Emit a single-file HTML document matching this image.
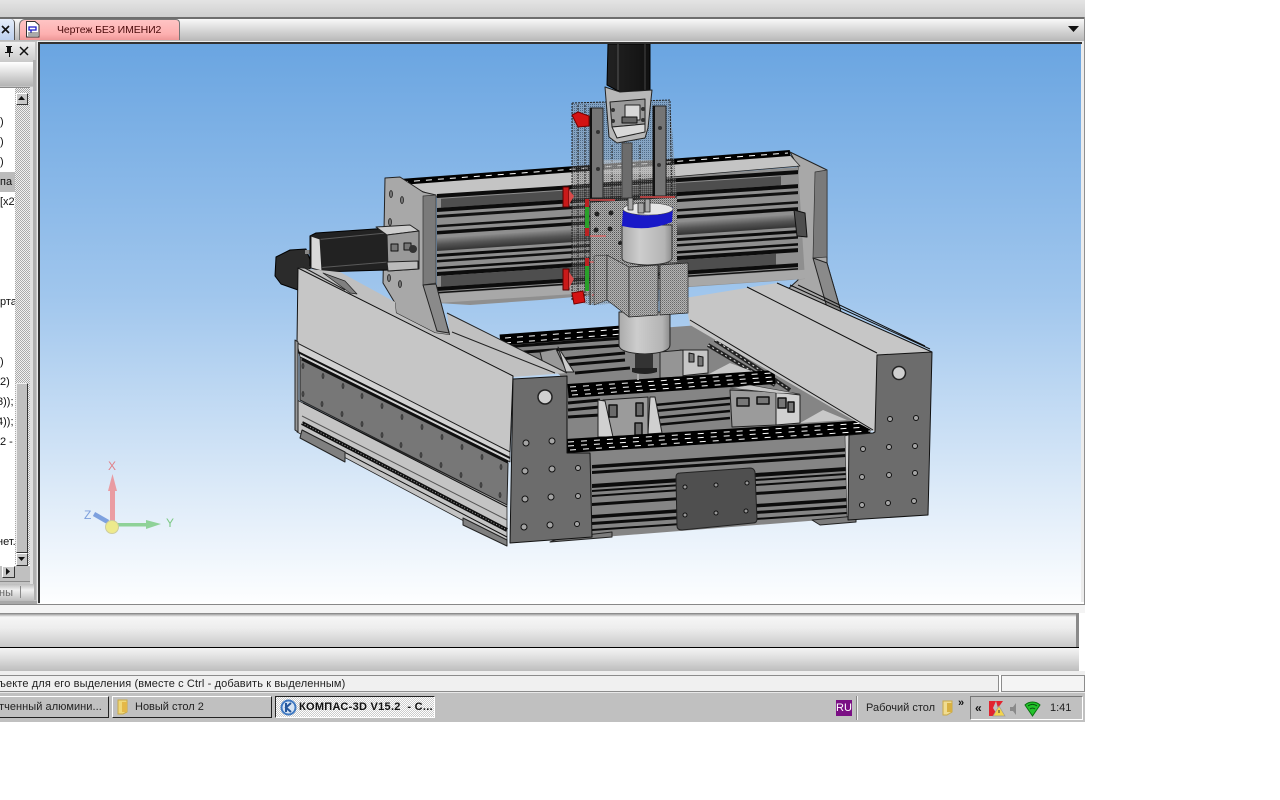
<!DOCTYPE html>
<html lang="ru"><head><meta charset="utf-8"><title>КОМПАС-3D V15.2</title>
<style>
html,body{margin:0;padding:0;background:#fff;width:1280px;height:800px;overflow:hidden}
body{position:relative;font:11px "Liberation Sans","Noto Sans CJK SC",sans-serif;color:#111}
.a{position:absolute;box-sizing:border-box}
.t{position:absolute;white-space:nowrap;line-height:13px}
</style></head><body>

<!-- window top -->
<div class="a" style="left:0;top:0;width:1085px;height:17px;background:linear-gradient(#e4e4e4,#cfcfcf)"></div>
<div class="a" style="left:0;top:17px;width:1085px;height:2px;background:#6e6e6e"></div>
<div class="a" style="left:0;top:19px;width:1085px;height:22px;background:linear-gradient(#f8f8f8,#d4d4d4 55%,#b8b8b8)"></div>
<div class="a" style="left:1084px;top:17px;width:1px;height:587px;background:#909090"></div>

<!-- left doc tab -->
<div class="a" style="left:0;top:19px;width:15px;height:21px;background:linear-gradient(#e6eefa,#bcd0ee);border-right:1px solid #555;border-radius:0 4px 0 0"></div>
<svg class="a" style="left:1px;top:25px" width="10" height="10"><path d="M1 1L8 8M8 1L1 8" stroke="#111" stroke-width="1.6"/></svg>
<!-- red tab -->
<div class="a" style="left:19px;top:19px;width:161px;height:21px;background:linear-gradient(#ffc4c4,#fdb0b0 70%,#ee9898);border:1px solid #777;border-bottom:0;border-radius:6px 4px 0 0"></div>
<svg class="a" style="left:26px;top:21px" width="14" height="17"><path d="M.5.5H9L13 4V16H.5Z" fill="#fff" stroke="#333"/><path d="M3 6H10V9H3ZM5 9V12" fill="none" stroke="#1a1ac8" stroke-width="1.3"/><path d="M2 12H12M2 14H12" stroke="#555"/></svg>
<div class="t" style="left:57px;top:24px;color:#4a0b0b;font-size:10.500px;letter-spacing:-.1px">Чертеж БЕЗ ИМЕНИ2</div>
<svg class="a" style="left:1068px;top:26px" width="11" height="7"><path d="M0 0H11L5.500 6Z" fill="#111"/></svg>

<!-- left panel -->
<div class="a" style="left:0;top:41px;width:39px;height:563px;background:#c4c4c4"></div>
<div class="a" style="left:0;top:42px;width:35px;height:20px;background:linear-gradient(#f0f0f0,#c9c9c9)"></div>
<svg class="a" style="left:2px;top:45px" width="30" height="13"><path d="M4 1H10V2H9V7H11V8H8V12H7V8H3V7H5V2H4Z" fill="#111"/><path d="M18 2L26 10M26 2L18 10" stroke="#111" stroke-width="1.5"/></svg>
<div class="a" style="left:0;top:62px;width:34px;height:24px;background:linear-gradient(#fff,#e6e6e6 35%,#b4b4b4)"></div>
<div class="a" style="left:0;top:87px;width:31px;height:495px;background:#fff;border-right:1px solid #8a8a8a;border-top:1px solid #8a8a8a;border-bottom:1px solid #8a8a8a"></div>
<div class="t" style="left:0;top:116px">)</div>
<div class="t" style="left:0;top:136px">)</div>
<div class="t" style="left:0;top:156px">)</div>
<div class="a" style="left:0;top:172px;width:15px;height:20px;background:#bcbcbc"></div>
<div class="t" style="left:0;top:176px">па (</div>
<div class="t" style="left:0;top:196px">[x2]</div>
<div class="t" style="left:0;top:296px">рта</div>
<div class="t" style="left:0;top:356px">)</div>
<div class="t" style="left:0;top:376px">2)</div>
<div class="t" style="left:-3px;top:396px">3)); :</div>
<div class="t" style="left:-3px;top:416px">4)); :</div>
<div class="t" style="left:0;top:436px">2 -</div>
<div class="t" style="left:-3px;top:536px">нет.</div>
<div class="a" style="left:15px;top:88px;width:15px;height:477px;background-color:#ddd;background-image:conic-gradient(#aaa 25%,#f2f2f2 0 50%,#aaa 0 75%,#f2f2f2 0);background-size:2px 2px"></div>
<!-- scrollbar -->
<div class="a" style="left:16px;top:93px;width:12px;height:12px;background:#c8c8c8;border:1px solid;border-color:#fff #333 #333 #fff"></div>
<svg class="a" style="left:18px;top:96px" width="8" height="5"><path d="M0 4H7L3.500 0Z" fill="#111"/></svg>
<div class="a" style="left:16px;top:383px;width:12px;height:170px;background:#c0c0c0;border:1px solid;border-color:#eee #333 #333 #eee"></div>
<div class="a" style="left:16px;top:553px;width:12px;height:13px;background:#c8c8c8;border:1px solid;border-color:#fff #333 #333 #fff"></div>
<svg class="a" style="left:18px;top:557px" width="8" height="5"><path d="M0 0H7L3.500 4Z" fill="#111"/></svg>
<div class="a" style="left:0;top:566px;width:30px;height:15px;background:#c0c0c0"></div>
<div class="a" style="left:2px;top:566px;width:13px;height:12px;background:#c8c8c8;border:1px solid;border-color:#fff #333 #333 #fff"></div>
<svg class="a" style="left:6px;top:568px" width="5" height="8"><path d="M0 0V7L4 3.500Z" fill="#111"/></svg>
<div class="a" style="left:30px;top:87px;width:3px;height:497px;background:#e0e0e0"></div>
<div class="a" style="left:33px;top:60px;width:3px;height:540px;background:#b0b0b0"></div>
<div class="a" style="left:0;top:584px;width:34px;height:17px;background:linear-gradient(#bdbdbd,#f0f0f0 35%,#bcbcbc)"></div>
<div class="t" style="left:-1px;top:587px;color:#666">ны</div>
<div class="a" style="left:20px;top:586px;width:1px;height:12px;background:#888"></div>
<div class="a" style="left:0;top:601px;width:39px;height:3px;background:#a8a8a8"></div>

<!-- viewport -->
<div class="a" style="left:37px;top:41px;width:1047px;height:563px;background:#ececec;"></div>
<div class="a" style="left:38px;top:42px;width:2px;height:561px;background:#333"></div>
<div class="a" style="left:38px;top:42px;width:1044px;height:2px;background:#333"></div>
<div class="a" style="left:40px;top:602px;width:1044px;height:2px;background:#fff"></div>

<svg class="a" style="left:0;top:0" width="1280" height="800" viewBox="0 0 1280 800">
<defs>
<linearGradient id="sky" x1="0" y1="0" x2="0" y2="1"><stop offset="0" stop-color="#6aa5e1"/><stop offset=".45" stop-color="#a0c6ed"/><stop offset=".8" stop-color="#dceaf8"/><stop offset="1" stop-color="#fdfeff"/></linearGradient>
<linearGradient id="rod" x1="0" y1="0" x2="0" y2="1"><stop offset="0" stop-color="#8a8a8a"/><stop offset=".5" stop-color="#555"/><stop offset="1" stop-color="#333"/></linearGradient>
<linearGradient id="cyl" x1="0" y1="0" x2="1" y2="0"><stop offset="0" stop-color="#aaa"/><stop offset=".35" stop-color="#cdcdcd"/><stop offset=".85" stop-color="#b4b4b4"/><stop offset="1" stop-color="#8c8c8c"/></linearGradient>
<linearGradient id="motor" x1="0" y1="0" x2="1" y2="0"><stop offset="0" stop-color="#222"/><stop offset="1" stop-color="#111"/></linearGradient>
<pattern id="st" width="2" height="2" patternUnits="userSpaceOnUse"><rect width="2" height="2" fill="#b4b4b4"/><rect width="1" height="1" fill="#6a6a6a"/><rect x="1" y="1" width="1" height="1" fill="#8a8a8a"/></pattern>
<pattern id="stl" width="2" height="2" patternUnits="userSpaceOnUse"><rect width="1" height="1" fill="#222"/><rect x="1" y="1" width="1" height="1" fill="#999"/></pattern>
<pattern id="stb" width="2" height="2" patternUnits="userSpaceOnUse"><rect width="2" height="2" fill="#b0b0b0"/><rect width="1" height="1" fill="#555"/><rect x="1" y="1" width="1" height="1" fill="#888"/></pattern>
<clipPath id="vp"><rect x="40" y="44" width="1041" height="558"/></clipPath>
</defs>
<rect x="40" y="44" width="1041" height="558" fill="url(#sky)"/>
<g clip-path="url(#vp)" stroke-linejoin="round">

<!-- bed base -->
<polygon points="500,340 700,325 880,430 567,455 560,375" fill="#858585"/>
<g stroke="#0c0c0c" fill="none">
<path d="M503,347L625,338M510,353L625,345" stroke-width="3"/>
<path d="M560,359L625,353M565,365L625,360M575,373L630,368" stroke-width="3"/>
<path d="M568,403L600,400M568,410L600,407M568,417L600,415" stroke-width="3"/>
<path d="M655,405L730,398M655,411L730,404M655,418L730,411M655,425L730,418" stroke-width="2.500"/>
</g>
<!-- back slotted strip -->
<path d="M500,340L622,331" stroke="#000" stroke-width="11"/>
<path d="M505,338L622,329M505,343L622,334" stroke="#fff" stroke-width="1" stroke-dasharray="6 6"/>

<!-- right rail inner hatch -->
<path d="M708,345L775,385M715,340L790,390" stroke="#222" stroke-width="4"/>
<path d="M708,345L775,385M715,340L790,390" stroke="#ddd" stroke-width="1" stroke-dasharray="2 3"/>
<polygon points="707,375 730,363 757,373" fill="#c8c8c8"/>
<polygon points="800,423 823,410 847,420" fill="#c8c8c8"/>

<!-- block C -->
<polygon points="680,350 708,350 708,373 680,376" fill="#c6c6c6" stroke="#222"/>
<polygon points="660,352 683,350 683,377 660,378" fill="#959595" stroke="#222"/>
<path d="M689,353V362H694V354ZM698,356V366H703V357Z" fill="#777" stroke="#111"/>
<polygon points="540,352 556,349 567,372 545,372" fill="#999" stroke="#222"/>
<polygon points="558,347 566,372 574,372" fill="#ccc" stroke="#222"/>

<!-- middle slotted strip -->
<path d="M568,391L775,377" stroke="#000" stroke-width="14"/>
<path d="M570,387L772,373M571,391L774,377M572,395L775,381" stroke="#fff" stroke-width="1" stroke-dasharray="6 7"/>

<!-- block A -->
<polygon points="603,400 648,397 648,435 603,437" fill="#9b9b9b" stroke="#222"/>
<polygon points="598,400 605,401 613,437 598,437" fill="#d0d0d0" stroke="#222"/>
<polygon points="650,397 655,397 662,433 648,434" fill="#d0d0d0" stroke="#222"/>
<path d="M609,405H617V417H609ZM636,403H643V416H636ZM635,423H642V435H635Z" fill="#6a6a6a" stroke="#111" stroke-width="1.500"/>
<!-- block B -->
<polygon points="730,390 776,392 776,425 732,427" fill="#9b9b9b" stroke="#222"/>
<polygon points="776,392 800,395 800,423 776,425" fill="#d0d0d0" stroke="#222"/>
<polygon points="730,388 750,385 800,394 776,393" fill="#c6c6c6" stroke="#333" stroke-width=".6"/>
<path d="M737,398H749V406H737ZM757,397H769V404H757ZM778,398H786V408H778ZM788,402H794V412H788Z" fill="#777" stroke="#111" stroke-width="1.500"/>

<!-- rear gantry and right plate -->
<polygon points="798,167 790,152 827,170 827,263 840,308 842,317 827,310 787,290 798,280" fill="#a8a8a8" stroke="#222"/>
<polygon points="815,172 827,170 827,257 813,258" fill="#7a7a7a" stroke="#333" stroke-width=".7"/>
<polygon points="813,258 827,263 840,308 842,317 828,311" fill="#8a8a8a" stroke="#222"/>

<!-- gantry face -->
<polygon points="437,195 798,167 805,279 689,287 540,300 470,305 437,303" fill="#8f8f8f"/>
<polygon points="403,184 790,155 800,166 437,197" fill="#c4c4c4" stroke="#222" stroke-width=".7"/>
<path d="M400,182L790,153" stroke="#000" stroke-width="6"/>
<path d="M402,182L788,153" stroke="#fff" stroke-width="1" stroke-dasharray="6 6"/>
<g transform="matrix(1,-0.066,0,1,437,0)">
  <rect x="0" y="194" width="361" height="4" fill="#0c0c0c"/>
  <rect x="4" y="199" width="340" height="9" fill="#4e4e4e"/>
  <rect x="0" y="208" width="361" height="4" fill="#0c0c0c"/>
  <rect x="0" y="215" width="361" height="3" fill="#111"/>
  <rect x="0" y="225" width="361" height="2.500" fill="#111"/>
  <rect x="0" y="231" width="361" height="3.500" fill="#0c0c0c"/>
  <rect x="0" y="238" width="366" height="13" fill="url(#rod)"/>
  <rect x="0" y="254" width="361" height="3" fill="#0c0c0c"/>
  <rect x="0" y="260" width="361" height="2.500" fill="#111"/>
  <rect x="0" y="267" width="361" height="2.500" fill="#0c0c0c"/>
  <rect x="0" y="272" width="361" height="4" fill="#0c0c0c"/>
  <rect x="4" y="276" width="335" height="11" fill="#4e4e4e"/>
  <rect x="0" y="287" width="361" height="4" fill="#0c0c0c"/>
  <rect x="0" y="292" width="361" height="1.500" fill="#111"/>
  <rect x="0" y="294" width="370" height="9" fill="#a8a8a8"/>
</g>
<polygon points="794,210 805,213 807,237 797,236" fill="#4e4e4e" stroke="#111"/>

<!-- left gantry plate -->
<polygon points="385,178 400,177 423,192 436,195 436,285 440,303 450,335 435,333 396,313 395,303 383,283" fill="#a8a8a8" stroke="#222"/>
<polygon points="423,196 436,195 436,283 423,285" fill="#7a7a7a" stroke="#333" stroke-width=".7"/>
<polygon points="423,285 436,284 449,333 437,331" fill="#8a8a8a" stroke="#222"/>
<g fill="#777" stroke="#222" stroke-width=".8"><ellipse cx="391" cy="194" rx="1.500" ry="3.500"/><ellipse cx="402" cy="200" rx="1.500" ry="3.500"/><ellipse cx="390" cy="222" rx="1.500" ry="3.500"/><ellipse cx="389" cy="278" rx="1.500" ry="3.500"/><ellipse cx="400" cy="284" rx="1.500" ry="3.500"/></g>

<!-- back Y motor -->
<polygon points="276,257 290,250 306,249 312,265 298,290 281,284 275,276" fill="#2b2b2b" stroke="#000"/>
<rect x="305" y="250" width="12" height="4" fill="#888"/>
<!-- X motor -->
<polygon points="310,236 316,233 390,228 388,270 320,272 310,266" fill="#222" stroke="#000"/>
<path d="M314,240L386,233M316,268L388,262" stroke="#5a5a5a"/>
<polygon points="311,236 320,239 322,271 311,268" fill="#d8d8d8" stroke="#222"/>
<polygon points="376,227 410,225 419,231 387,235" fill="#cdcdcd" stroke="#222"/>
<polygon points="387,235 419,231 419,269 388,271" fill="#999" stroke="#222"/>
<polygon points="387,262 418,261 418,269 388,271" fill="#bbb" stroke="#222"/>
<path d="M391,244H398V251H391ZM404,243H411V250H404Z" fill="#777" stroke="#111"/>
<circle cx="413" cy="249" r="4" fill="#333"/>

<!-- left rail back strip -->
<polygon points="340,272 395,302 396,313 435,333 450,335 447,313 567,373 513,377 298,268" fill="#c0c0c0"/>
<polygon points="323,273 345,281 357,294 350,293" fill="#808080" stroke="#222" stroke-width=".7"/>
<path d="M303,267L345,290M447,313L567,373M452,332L555,373" stroke="#222" stroke-width="1"/>
<!-- left rail top face -->
<polygon points="298,268 513,376 510,452 297,343" fill="#c6c6c6" stroke="#111"/>
<polygon points="297,343 300,357 510,462 510,452" fill="#d2d2d2" stroke="#222" stroke-width=".8"/>
<path d="M298,352L510,458" stroke="#111" stroke-width="2"/>
<!-- dark side plate -->
<polygon points="300,357 508,463 507,505 300,400" fill="#777" stroke="#222"/>
<path d="M302,359L508,462" stroke="#111" stroke-width="3"/>
<g fill="#555" stroke="#222" stroke-width=".6">
<ellipse cx="303" cy="366" rx="1" ry="2.500"/><ellipse cx="323" cy="376" rx="1" ry="2.500"/><ellipse cx="343" cy="386" rx="1" ry="2.500"/><ellipse cx="362" cy="396" rx="1" ry="2.500"/><ellipse cx="382" cy="406" rx="1" ry="2.500"/><ellipse cx="402" cy="417" rx="1" ry="2.500"/><ellipse cx="422" cy="427" rx="1" ry="2.500"/><ellipse cx="442" cy="437" rx="1" ry="2.500"/><ellipse cx="462" cy="447" rx="1" ry="2.500"/><ellipse cx="482" cy="457" rx="1" ry="2.500"/><ellipse cx="501" cy="467" rx="1" ry="2.500"/>
<ellipse cx="303" cy="394" rx="1" ry="2.500"/><ellipse cx="322" cy="404" rx="1" ry="2.500"/><ellipse cx="342" cy="414" rx="1" ry="2.500"/><ellipse cx="362" cy="424" rx="1" ry="2.500"/><ellipse cx="382" cy="435" rx="1" ry="2.500"/><ellipse cx="401" cy="445" rx="1" ry="2.500"/><ellipse cx="421" cy="455" rx="1" ry="2.500"/><ellipse cx="441" cy="465" rx="1" ry="2.500"/><ellipse cx="461" cy="475" rx="1" ry="2.500"/><ellipse cx="481" cy="485" rx="1" ry="2.500"/><ellipse cx="500" cy="495" rx="1" ry="2.500"/></g>
<!-- lower strips -->
<polygon points="297,400 507,505 507,544 297,432" fill="#c4c4c4" stroke="#222" stroke-width=".8"/>
<path d="M303,403L507,507" stroke="#111"/>
<path d="M302,416L507,520" stroke="#555"/>
<path d="M302,423L507,530" stroke="#111" stroke-width="4"/>
<path d="M302,423L507,530" stroke="#aaa" stroke-dasharray="1 2"/>
<path d="M302,430L507,537" stroke="#111"/>
<polygon points="302,430 345,452 345,462 300,438" fill="#808080" stroke="#222"/>
<polygon points="463,518 507,540 507,546 463,525" fill="#808080" stroke="#222"/>
<polygon points="295,340 298,342 298,432 295,430" fill="#999" stroke="#222"/>

<!-- front beam -->
<polygon points="590,452 847,435 847,518 590,538" fill="#858585"/>
<g transform="matrix(1,-0.067,0,1,592,0)">
 <g fill="#0c0c0c"><rect y="465" width="256" height="3.500"/><rect y="471" width="256" height="3"/><rect y="484" width="256" height="4"/><rect y="490" width="256" height="2"/><rect y="495" width="256" height="2"/><rect y="503" width="256" height="3"/><rect y="515" width="256" height="3.500"/><rect y="522" width="256" height="3"/><rect y="529" width="256" height="2"/></g>
</g>
<polygon points="845,436 849,435 849,518 847,519" fill="#cfcfcf" stroke="#333" stroke-width=".6"/>
<polygon points="812,520 856,516 856,522 820,525" fill="#7c7c7c" stroke="#222"/>
<polygon points="560,538 612,532 612,537 550,542" fill="#7c7c7c" stroke="#222"/>
<!-- dark plate -->
<path d="M680,473L750,468Q754,468 755,472L757,519Q757,523 753,523L682,530Q677,530 677,526L676,477Q676,473 680,473Z" fill="#4f4f4f" stroke="#222"/>
<g fill="#999" stroke="#111" stroke-width="1"><circle cx="685" cy="487" r="2"/><circle cx="716" cy="485" r="2"/><circle cx="747" cy="483" r="2"/><circle cx="685" cy="515" r="2"/><circle cx="716" cy="513" r="2"/><circle cx="746" cy="511" r="2"/></g>

<!-- front slotted strip -->
<path d="M566,446L870,427" stroke="#000" stroke-width="14"/>
<path d="M568,442L866,423M568,446L868,427M570,450L870,431" stroke="#fff" stroke-width="1" stroke-dasharray="6 7"/>

<!-- right rail top -->
<polygon points="685,298 777,283 932,352 877,355 875,432 860,424 690,325" fill="#c6c6c6"/>
<path d="M747,287L877,353M690,320L873,430M777,283L932,352M790,285L930,349M798,285L925,346" stroke="#111"/>
<!-- right plate -->
<polygon points="877,355 932,352 928,515 848,520 849,435 873,433 875,432" fill="#6c6c6c" stroke="#111"/>
<circle cx="899" cy="373" r="6.500" fill="#cfcfcf" stroke="#222" stroke-width="1.500"/>
<g fill="#a5a5a5" stroke="#111"><circle cx="890" cy="419" r="2.500"/><circle cx="916" cy="418" r="2.500"/><circle cx="863" cy="449" r="2.500"/><circle cx="889" cy="447" r="2.500"/><circle cx="915" cy="446" r="2.500"/><circle cx="862" cy="477" r="2.500"/><circle cx="889" cy="475" r="2.500"/><circle cx="915" cy="473" r="2.500"/><circle cx="862" cy="505" r="2.500"/><circle cx="888" cy="503" r="2.500"/><circle cx="914" cy="501" r="2.500"/></g>
<!-- left front plate -->
<polygon points="513,379 567,376 567,453 590,453 592,537 510,543" fill="#6c6c6c" stroke="#111"/>
<circle cx="545" cy="397" r="7" fill="#cfcfcf" stroke="#222" stroke-width="1.500"/>
<g fill="#a5a5a5" stroke="#111"><circle cx="526" cy="443" r="3"/><circle cx="552" cy="441" r="3"/><circle cx="525" cy="471" r="3"/><circle cx="552" cy="469" r="3"/><circle cx="578" cy="468" r="2.500"/><circle cx="525" cy="499" r="3"/><circle cx="551" cy="497" r="3"/><circle cx="578" cy="496" r="2.500"/><circle cx="524" cy="527" r="3"/><circle cx="550" cy="525" r="3"/><circle cx="577" cy="524" r="2.500"/></g>

<!-- Z carriage frame -->
<polygon points="572,103 670,100 677,197 677,300 590,305 572,300" fill="#888" opacity=".25"/>
<polygon points="572,103 670,100 677,197 677,300 590,305 572,300" fill="url(#stl)" opacity=".45"/>
<path d="M572,103L670,100L672,205M572,103V300M578,105V300M585,105V296M612,145V205M640,145V205" stroke="#222" stroke-width="1" fill="none" stroke-dasharray="2 1"/>
<rect x="592" y="160" width="65" height="14" fill="#c8c8c8" opacity=".5"/>
<rect x="590" y="108" width="13" height="90" fill="#757575" stroke="#222"/>
<rect x="590" y="108" width="2" height="90" fill="#111"/>
<rect x="653" y="106" width="13" height="90" fill="#757575" stroke="#222"/>
<rect x="653" y="106" width="2" height="90" fill="#111"/>
<g fill="#333"><circle cx="598" cy="132" r="2"/><circle cx="598" cy="169" r="2"/><circle cx="660" cy="128" r="2"/><circle cx="659" cy="165" r="2"/></g>
<rect x="622" y="143" width="10" height="55" fill="#6c6c6c" stroke="#444"/>
<!-- Z motor -->
<polygon points="608,44 650,44 650,90 620,92 607,85" fill="url(#motor)" stroke="#000"/>
<path d="M618,44V90" stroke="#555"/><path d="M645,44V90" stroke="#444"/>
<!-- mount -->
<polygon points="605,87 620,92 652,90 648,128 645,138 617,143 609,137" fill="#b8b8b8" stroke="#222"/>
<polygon points="610,102 645,99 645,124 612,127" fill="#9a9a9a" stroke="#222"/>
<path d="M625,105H640V120H625Z" fill="#d8d8d8" stroke="#222"/>
<path d="M622,117H637V123H622Z" fill="#666" stroke="#111"/>
<polygon points="612,127 645,124 645,132 617,138" fill="#d8d8d8" stroke="#222"/>
<g fill="#333"><circle cx="613" cy="110" r="2"/><circle cx="613" cy="121" r="2"/><circle cx="643" cy="109" r="2"/><circle cx="643" cy="120" r="2"/></g>
<!-- red stops -->
<polygon points="572,115 578,112 589,116 589,126 578,127" fill="#d41313" stroke="#700"/>
<path d="M563,187H569V207H563ZM563,269H569V290H563Z" fill="#c91a1a" stroke="#500"/>
<path d="M569,190L574,196L569,205ZM569,272L574,279L569,288Z" fill="#d84a4a"/>
<polygon points="572,293 583,291 585,302 574,304" fill="#d41313" stroke="#700"/>
<rect x="585" y="207" width="4" height="21" fill="#2aa02a"/>
<rect x="585" y="266" width="4" height="25" fill="#2aa02a"/>
<rect x="585" y="199" width="4" height="8" fill="#b22"/>
<rect x="585" y="228" width="4" height="8" fill="#b22"/>
<rect x="585" y="258" width="4" height="8" fill="#b22"/>
<!-- Z carriage plate -->
<polygon points="590,202 677,197 677,262 640,264 590,305" fill="url(#stb)"/>
<path d="M590,202L677,197M590,202V305" stroke="#222"/>
<g fill="#222"><circle cx="597" cy="214" r="2.500"/><circle cx="611" cy="213" r="2.500"/><circle cx="596" cy="230" r="2.500"/><circle cx="610" cy="229" r="2.500"/><circle cx="620" cy="243" r="2"/></g>
<path d="M590,236H606M590,262H612M592,295H608" stroke="#d66" stroke-width="2" opacity=".7"/>
<path d="M590,200H615M640,197H675" stroke="#c44" stroke-width="2" opacity=".8"/>

<!-- lower spindle -->
<path d="M619,312V345Q619,353 645,354Q670,353 670,345V312Z" fill="url(#cyl)" stroke="#222"/>
<rect x="635" y="354" width="18" height="14" fill="#333"/>
<path d="M632,368H657V372Q645,376 632,372Z" fill="#222"/>
<rect x="637" y="374" width="2" height="6" fill="#aaa"/>
<!-- clamp block -->
<polygon points="594,256 607,255 607,300 594,305" fill="url(#stb)" stroke="#333" stroke-width=".6"/>
<polygon points="607,255 629,267 629,317 607,300" fill="url(#st)" stroke="#222" stroke-width=".7"/>
<polygon points="629,267 658,265 658,315 629,317" fill="url(#st)" stroke="#222" stroke-width=".8"/>
<polygon points="660,265 688,263 688,313 660,315" fill="url(#st)" stroke="#222" stroke-width=".7"/>
<!-- upper spindle -->
<path d="M622,225V258Q622,264 648,265Q672,264 672,258V225Z" fill="url(#cyl)" stroke="#333"/>
<path d="M623,210Q648,222 673,207L672,222Q648,232 622,226Z" fill="#1919c8"/>
<ellipse cx="648" cy="209" rx="25" ry="6" fill="#e6e6e6" stroke="#444" stroke-width=".6"/>
<g fill="#a8a8a8" stroke="#222" stroke-width=".8"><rect x="628" y="198" width="5" height="12"/><rect x="638" y="203" width="6" height="10"/><rect x="645" y="199" width="5" height="13"/></g>

<!-- triad -->
<g opacity=".75">
<rect x="110" y="491" width="5" height="33" fill="#ee8286"/>
<polygon points="112.500,474 108,491 117,491" fill="#ee8286"/>
<rect x="116" y="523" width="30" height="3.500" fill="#72c878"/>
<polygon points="161,524 146,520 146,529" fill="#72c878"/>
<path d="M108,522L94,514" stroke="#5b87d6" stroke-width="4.500"/>
<circle cx="112" cy="527" r="6.500" fill="#f0e868" stroke="#c4c080"/>
</g>
</g>
<text x="108" y="470" font-family="Liberation Sans,sans-serif" font-size="12" fill="#e08088">X</text>
<text x="166" y="527" font-family="Liberation Sans,sans-serif" font-size="12" fill="#7cc884">Y</text>
<text x="84" y="519" font-family="Liberation Sans,sans-serif" font-size="12" fill="#7d9fdc">Z</text>
</svg>

<!-- below viewport -->
<div class="a" style="left:0;top:604px;width:1085px;height:1px;background:#888"></div>
<div class="a" style="left:0;top:605px;width:1085px;height:8px;background:#f4f4f4"></div>
<div class="a" style="left:0;top:613px;width:1079px;height:34px;background:linear-gradient(#8c8c8c,#8c8c8c 1px,#a0a0a0 1px,#f6f6f6 4px,#ededed 45%,#c8c8c8);border-right:3px solid #8a8a8a"></div>
<div class="a" style="left:0;top:647px;width:1079px;height:1px;background:#000"></div>
<div class="a" style="left:0;top:648px;width:1079px;height:23px;background:linear-gradient(#f4f4f4,#ddd 45%,#bdbdbd)"></div>
<div class="a" style="left:0;top:671px;width:1085px;height:4px;background:#efefef"></div>
<!-- status -->
<div class="a" style="left:-2px;top:675px;width:1001px;height:17px;background:#f0f0f0;border:1px solid #8c8c8c"></div>
<div class="a" style="left:1001px;top:675px;width:84px;height:17px;background:#f4f4f4;border:1px solid #8c8c8c"></div>
<div class="t" style="left:-1px;top:678px;color:#222;letter-spacing:.12px">ъекте для его выделения (вместе с Ctrl - добавить к выделенным)</div>
<!-- taskbar -->
<div class="a" style="left:0;top:692px;width:1085px;height:30px;background:#c0c0c0;border-top:1px solid #e8e8e8"></div>
<div class="a" style="left:-3px;top:696px;width:112px;height:22px;background:#c0c0c0;border:1px solid;border-color:#fff #222 #222 #fff"></div>
<div class="t" style="left:-1px;top:701px;color:#222;letter-spacing:.05px">тченный алюмини...</div>
<div class="a" style="left:112px;top:696px;width:160px;height:22px;background:#c0c0c0;border:1px solid;border-color:#fff #222 #222 #fff"></div>
<svg class="a" style="left:116px;top:699px" width="14" height="16"><path d="M2 1H11V13L7 15H2Z" fill="#f0d878" stroke="#c8a848"/><path d="M6 3H11V13H6Z" fill="#e4b848"/></svg>
<div class="t" style="left:135px;top:701px;color:#222">Новый стол 2</div>
<div class="a" style="left:275px;top:696px;width:160px;height:22px;background-color:#e6e6e6;background-image:conic-gradient(#fff 25%,#ccc 0 50%,#fff 0 75%,#ccc 0);background-size:2px 2px;border:1px solid;border-color:#222 #fff #fff #222"></div>
<svg class="a" style="left:280px;top:699px" width="17" height="17"><circle cx="8.500" cy="8.500" r="8" fill="#3f78c0"/><circle cx="8.500" cy="8.500" r="6" fill="#d6e4f4"/><path d="M6 4V13M11 4L6 8.500L11 13" fill="none" stroke="#24569c" stroke-width="2"/></svg>
<div class="t" style="left:299px;top:701px;font-weight:bold;color:#111;letter-spacing:.28px">КОМПАС-3D V15.2&nbsp; - C...</div>
<!-- tray -->
<div class="a" style="left:836px;top:700px;width:16px;height:16px;background:#7a0f84;color:#fff;font-size:11px;line-height:16px;text-align:center">RU</div>
<div class="a" style="left:856px;top:696px;width:1px;height:24px;background:#888"></div>
<div class="a" style="left:857px;top:696px;width:1px;height:24px;background:#f0f0f0"></div>
<div class="t" style="left:866px;top:702px;color:#222">Рабочий стол</div>
<svg class="a" style="left:942px;top:700px" width="12" height="16"><path d="M1 1H10V12L5 15H1Z" fill="#f0dc90" stroke="#c8a848"/><path d="M5 3H10V12H5Z" fill="#d8b040"/></svg>
<div class="t" style="left:958px;top:697px;font-weight:bold;font-size:11px">»</div>
<div class="a" style="left:970px;top:696px;width:113px;height:24px;background:#c0c0c0;border:1px solid;border-color:#777 #fff #fff #777"></div>
<div class="t" style="left:975px;top:702px;font-weight:bold;font-size:12px">«</div>
<svg class="a" style="left:988px;top:700px" width="18" height="17"><path d="M1 1H8L5 8L10 16H1Z" fill="#e2232e"/><path d="M8 1H15L10 8Z" fill="#e2232e"/><path d="M11 6L17 16H5Z" fill="#f4d44c" stroke="#999" stroke-width=".7"/><path d="M11 10V13" stroke="#333"/></svg>
<svg class="a" style="left:1009px;top:702px" width="9" height="14"><path d="M1 5H4L7 1V13L4 9H1Z" fill="#8a8a8a"/></svg>
<svg class="a" style="left:1024px;top:699px" width="17" height="18"><path d="M1 6A11 11 0 0 1 16 6L8.500 17Z" fill="#23c32b" stroke="#0a700f"/><path d="M4 7A7 7 0 0 1 13 7M6 10A4 4 0 0 1 11 10" fill="none" stroke="#0a500f"/></svg>
<div class="t" style="left:1050px;top:702px;color:#222">1:41</div>
</body></html>
